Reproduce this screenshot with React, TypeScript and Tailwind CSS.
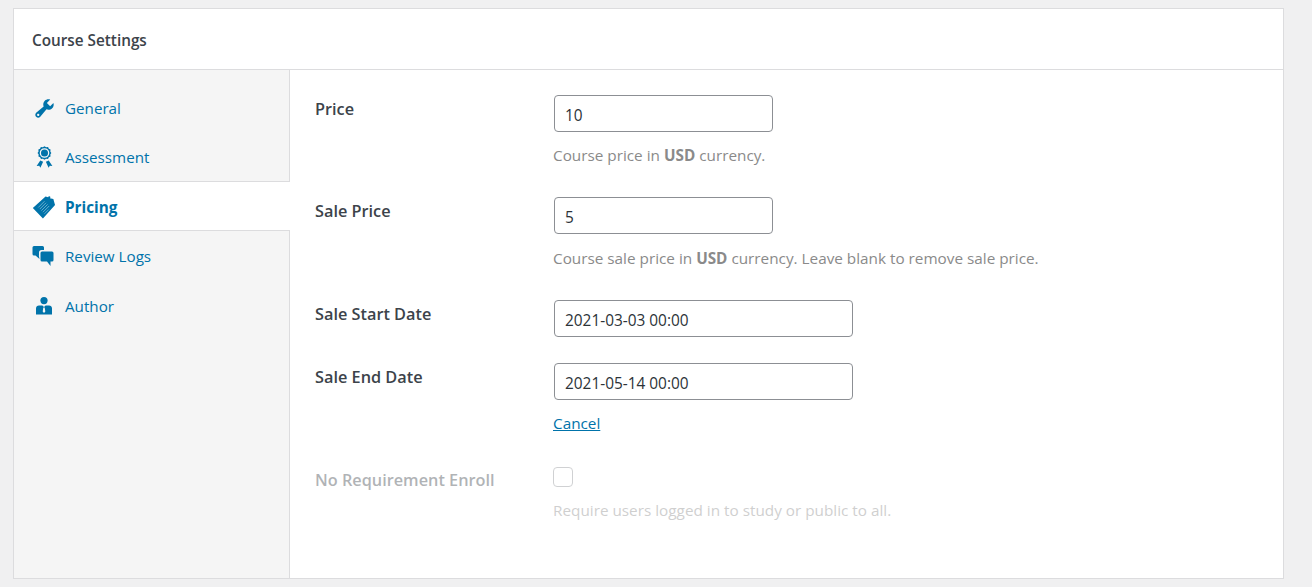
import type { ReactNode } from "react";

const font = { fontFamily: '"Open Sans", "Noto Sans", sans-serif' };

const WrenchIcon = () => (
  <svg viewBox="0 0 20 20" className="h-[23px] w-[23px]" fill="currentColor">
    <path d="M16.68 9.77c-1.34 1.34-3.3 1.67-4.95.99l-5.41 6.52c-.99.99-2.59.99-3.58 0s-.99-2.59 0-3.57l6.52-5.42c-.68-1.65-.35-3.61.99-4.95 1.28-1.28 3.12-1.62 4.72-1.06l-2.89 2.89 2.82 2.82 2.86-2.87c.53 1.58.18 3.39-1.08 4.65zM3.81 16.21c.4.39 1.04.39 1.43 0 .4-.4.4-1.04 0-1.43-.39-.4-1.03-.4-1.43 0-.39.39-.39 1.03 0 1.43z" />
  </svg>
);

const AwardIcon = () => (
  <svg viewBox="0 0 20 21" className="h-[24px] w-[23px]" fill="currentColor">
    <path
      fillRule="evenodd"
      d="M10 1l1.400.9 1.700-.2.7 1.500 1.500.7-.2 1.700.9 1.400-.9 1.400.2 1.700-1.500.7-.7 1.500-1.700-.2-1.400.9-1.400-.9-1.700.2-.7-1.500-1.500-.7.2-1.700L3.900 7l.9-1.400-.2-1.700 1.500-.7.7-1.500 1.700.2zM10 2.800a4.200 4.200 0 1 0 0 8.400 4.200 4.200 0 0 0 0-8.400z"
    />
    <circle cx="10" cy="7" r="3.100" />
    <path d="M6.300 13.600l2.500 1.100-2.400 5.300-1-1.900-2.300.3zM13.700 13.600l-2.500 1.100 2.400 5.300 1-1.900 2.300.3z" />
  </svg>
);

const TagIcon = () => (
  <svg viewBox="0 0 24 24" className="-ml-[1px] h-[25px] w-[25px]" fill="currentColor">
    <path d="M13 1.500l2.500.7.800-1.200 1.500.9-.6 1.100 3.300.9 1.600 5.700-11.600 13L.800 12.400z" />
    <g stroke="#ffffff" strokeWidth=".7" opacity=".55">
      <path d="M6 12l6-6M7.500 13.500l6-6M9 15l6-6M10.500 16.500l6-6M12 18l4-4" />
    </g>
  </svg>
);

const ChatIcon = () => (
  <svg viewBox="0 0 22 22" className="-ml-[1px] h-[22px] w-[22px]" fill="currentColor">
    <path d="M2 1h8.500A1.500 1.500 0 0 1 12 2.500V5H9.500A2.500 2.500 0 0 0 7 7.500V10.500H6.800l.7 3.500L3.500 10.500H2A1.500 1.500 0 0 1 .5 9V2.500A1.500 1.500 0 0 1 2 1z" />
    <path d="M10 6.500h10A1.500 1.500 0 0 1 21.500 8v7A1.500 1.500 0 0 1 20 16.500H18.500V21L15 16.500h-5A1.500 1.500 0 0 1 8.500 15V8A1.500 1.500 0 0 1 10 6.500z" />
  </svg>
);

const UserIcon = () => (
  <svg viewBox="0 0 20 20" className="ml-[1px] h-[20px] w-[20px]" fill="currentColor">
    <circle cx="10" cy="4.600" r="3.600" />
    <path d="M5 9.500h3.400L10 11l1.600-1.500H15c1.800 0 3 1.300 3 3V18.500H2V12.500c0-1.700 1.200-3 3-3z" />
    <path d="M9.300 11.500h1.400l.6 4-1.300 1.500-1.300-1.500z" fill="#f5f5f5" />
  </svg>
);

const navItems: { label: string; icon: ReactNode; height: string; active?: boolean }[] = [
  { label: "General", icon: <WrenchIcon />, height: "h-[49px]" },
  { label: "Assessment", icon: <AwardIcon />, height: "h-[48px]" },
  { label: "Pricing", icon: <TagIcon />, height: "h-[50px]", active: true },
  { label: "Review Logs", icon: <ChatIcon />, height: "h-[50px]" },
  { label: "Author", icon: <UserIcon />, height: "h-[50px]" },
];

function Field({ label, className, children }: { label: string; className?: string; children: ReactNode }) {
  return (
    <div className={`flex ${className ?? ""}`}>
      <div className="w-[238px] shrink-0 pt-[2px] text-[16.300px] font-semibold leading-[24px] text-[#3c434a]">{label}</div>
      <div className="flex-1">{children}</div>
    </div>
  );
}

function TextBox({ value, wide }: { value: string; wide?: boolean }) {
  return (
    <input
      readOnly
      value={value}
      className={`ml-[1px] block h-[37px] rounded-[4px] border border-[#8c8f94] bg-white px-[10px] pt-[4px] text-[15.400px] text-[#2c3338] ${wide ? "w-[299px]" : "w-[219px]"}`}
    />
  );
}

function Hint({ children, className }: { children: ReactNode; className?: string }) {
  return <p className={`text-[15.300px] leading-[20px] text-[#8a8a8a] ${className ?? "mt-[13px]"}`}>{children}</p>;
}

export default function App() {
  return (
    <div style={font} className="h-[587px] overflow-hidden bg-[#f0f0f1] pl-[13px] pr-[28px] pt-[8px]">
      <div className="flex h-[571px] flex-col border border-[#dcdcde] bg-white">
        <div className="flex h-[61px] shrink-0 items-center border-b border-[#dcdcde] pl-[18px] pt-[2px] text-[15.300px] font-semibold text-[#3c434a]">
          Course Settings
        </div>
        <div className="flex flex-1">
          <ul className="w-[276px] shrink-0 border-r border-[#dcdcde] bg-[#f5f5f5] pt-[14px]">
            {navItems.map(item => (
              <li
                key={item.label}
                className={
                  item.active
                    ? `-mr-[1px] flex ${item.height} items-center border-y border-[#dcdcde] bg-white pl-[19px] pt-[2px] text-[#0073aa]`
                    : `flex ${item.height} items-center pl-[19px] text-[#0073aa]`
                }
              >
                <span className="flex w-[32px] justify-start">{item.icon}</span>
                <span className={item.active ? "text-[15.300px] font-bold" : "text-[15.200px]"}>{item.label}</span>
              </li>
            ))}
          </ul>
          <div className="flex-1 pl-[25px] pt-[25px]">
            <Field label="Price">
              <TextBox value="10" />
              <Hint>
                Course price in <b className="font-bold">USD</b> currency.
              </Hint>
            </Field>
            <Field label="Sale Price" className="mt-[32px]">
              <TextBox value="5" />
              <Hint className="mt-[14px]">
                Course sale price in <b className="font-bold">USD</b> currency. Leave blank to remove sale price.
              </Hint>
            </Field>
            <Field label="Sale Start Date" className="mt-[32px]">
              <TextBox value="2021-03-03 00:00" wide />
            </Field>
            <Field label="Sale End Date" className="mt-[26px]">
              <TextBox value="2021-05-14 00:00" wide />
              <a className="mt-[13px] block text-[15.300px] leading-[20px] text-[#0073aa] underline">Cancel</a>
            </Field>
            <Field label="No Requirement Enroll" className="mt-[33px] opacity-40">
              <span className="mt-[1px] block h-[20px] w-[20px] rounded-[4px] border border-[#8c8f94] bg-white" />
              <Hint>Require users logged in to study or public to all.</Hint>
            </Field>
          </div>
        </div>
      </div>
    </div>
  );
}
